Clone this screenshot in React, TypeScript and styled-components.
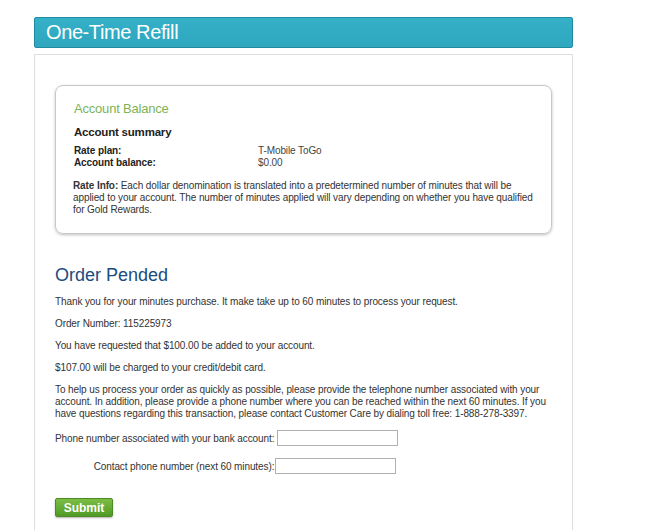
import React from "react";
import styled, { createGlobalStyle } from "styled-components";

const Global = createGlobalStyle`
  html, body { margin: 0; padding: 0; background: #fff; }
  body { font-family: "Liberation Sans", Arial, sans-serif; color: #333; }
`;

const Page = styled.div`
  width: 539px;
  margin-left: 34px;
  padding-top: 17px;
`;

const Header = styled.div`
  height: 29px;
  background: linear-gradient(#34b0c7, #2ea7bf);
  border: 1px solid #1f8aa0;
  border-radius: 2px;
  display: flex;
  align-items: center;
  padding-left: 11px;
  color: #fff;
  font-size: 20px;
  letter-spacing: -0.4px;
`;

const Panel = styled.div`
  margin-top: 6px;
  border: 1px solid #dedede;
  border-bottom: none;
  padding: 30px 20px 0 20px;
  height: 470px;
`;

const BalanceBox = styled.div`
  border: 1px solid #c8c8c8;
  border-radius: 8px;
  box-shadow: 0 1px 3px rgba(0, 0, 0, 0.25);
  padding: 15px 17px 16px 17px;
  height: 116px;
`;

const BoxTitle = styled.div`
  color: #7db355;
  font-size: 13px;
  line-height: 16px;
  letter-spacing: -0.2px;
  padding-left: 1px;
`;

const SubTitle = styled.div`
  font-weight: bold;
  font-size: 11.5px;
  letter-spacing: -0.2px;
  color: #222;
  margin-top: 9px;
  padding-left: 1px;
`;

const SummaryGrid = styled.div`
  display: grid;
  grid-template-columns: 184px 1fr;
  font-size: 10px;
  letter-spacing: -0.1px;
  line-height: 12px;
  margin-top: 7px;
  padding-left: 1px;
`;

const Label = styled.div`
  font-weight: bold;
  color: #222;
`;

const Value = styled.div`
  color: #444;
`;

const RateInfo = styled.p`
  font-size: 10px;
  letter-spacing: -0.1px;
  line-height: 12px;
  margin: 11px 0 0 0;
  color: #333;
`;

const OrderTitle = styled.h2`
  font-weight: normal;
  font-size: 18px;
  color: #1b4c7e;
  margin: 30px 0 0 0;
  line-height: 22px;
`;

const Para = styled.p`
  font-size: 10px;
  letter-spacing: -0.1px;
  line-height: 12px;
  margin: 10px 0 0 0;
  color: #333;
`;

const FormGrid = styled.div`
  display: grid;
  grid-template-columns: auto auto;
  justify-content: start;
  row-gap: 12px;
  column-gap: 3px;
  margin-top: 10px;
  font-size: 10px;
  letter-spacing: -0.1px;
  align-items: center;
`;

const FormLabel = styled.label`
  text-align: right;
  color: #333;
`;

const Input = styled.input<{ $shift?: number }>`
  width: 121px;
  height: 16px;
  box-sizing: border-box;
  border: 1px solid #b0b0b0;
  padding: 0;
  margin-left: ${(p) => p.$shift ?? 0}px;
`;

const SubmitButton = styled.button`
  display: block;
  margin-top: 24px;
  width: 58px;
  height: 19px;
  border: 1px solid #4e8a26;
  border-radius: 2px;
  background: linear-gradient(#7cbe44, #4f9a25);
  box-shadow: 0 1px 2px rgba(0,0,0,0.3);
  color: #fff;
  font-family: "Liberation Sans", Arial, sans-serif;
  font-weight: bold;
  font-size: 12px;
  padding: 0;
  cursor: pointer;
`;

export default function App() {
  return (
    <>
      <Global />
      <Page>
        <Header>One-Time Refill</Header>
        <Panel>
          <BalanceBox>
            <BoxTitle>Account Balance</BoxTitle>
            <SubTitle>Account summary</SubTitle>
            <SummaryGrid>
              <Label>Rate plan:</Label>
              <Value>T-Mobile ToGo</Value>
              <Label>Account balance:</Label>
              <Value>$0.00</Value>
            </SummaryGrid>
            <RateInfo>
              <b>Rate Info:</b> Each dollar denomination is translated into a predetermined number of minutes that will be applied to your account. The number of minutes applied will vary depending on whether you have qualified for Gold Rewards.
            </RateInfo>
          </BalanceBox>
          <OrderTitle>Order Pended</OrderTitle>
          <Para>Thank you for your minutes purchase. It make take up to 60 minutes to process your request.</Para>
          <Para>Order Number: 115225973</Para>
          <Para>You have requested that $100.00 be added to your account.</Para>
          <Para>$107.00 will be charged to your credit/debit card.</Para>
          <Para>To help us process your order as quickly as possible, please provide the telephone number associated with your account. In addition, please provide a phone number where you can be reached within the next 60 minutes. If you have questions regarding this transaction, please contact Customer Care by dialing toll free: 1-888-278-3397.</Para>
          <FormGrid>
            <FormLabel>Phone number associated with your bank account:</FormLabel>
            <Input $shift={0} />
            <FormLabel>Contact phone number (next 60 minutes):</FormLabel>
            <Input $shift={-2} />
          </FormGrid>
          <SubmitButton>Submit</SubmitButton>
        </Panel>
      </Page>
    </>
  );
}
